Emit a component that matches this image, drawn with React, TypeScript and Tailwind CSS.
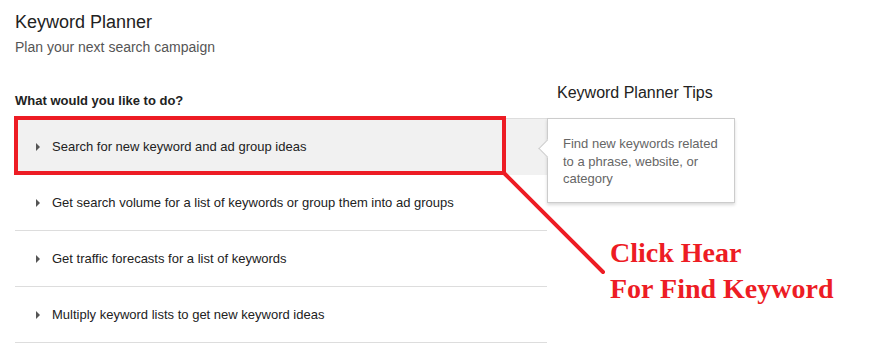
import React from "react";

const rows = [
  "Search for new keyword and ad group ideas",
  "Get search volume for a list of keywords or group them into ad groups",
  "Get traffic forecasts for a list of keywords",
  "Multiply keyword lists to get new keyword ideas",
];

function Caret() {
  return (
    <svg width="4" height="8" viewBox="0 0 4 8" className="shrink-0">
      <polygon points="0,0 4,4 0,8" fill="#555" />
    </svg>
  );
}

export default function App() {
  return (
    <div
      className="relative w-[879px] h-[343px] bg-white overflow-hidden pl-[15px] pt-[11px]"
      style={{ fontFamily: '"Liberation Sans", Arial, sans-serif' }}
    >
      <div className="text-[18px] leading-[22px] text-[#222]">Keyword Planner</div>
      <div className="mt-[5px] text-[14px] leading-[18px] text-[#555]">Plan your next search campaign</div>

      <div className="mt-[27px] flex items-start">
        <div className="w-[532px] pt-[10px]">
          <div className="text-[13px] leading-[16px] font-bold text-[#222]">What would you like to do?</div>
          <div className="mt-[9px] border-t border-[#ddd]">
            {rows.map((r, i) => (
              <div
                key={r}
                className={
                  i === 0
                    ? "h-[56px] flex items-center gap-[12px] pl-[21px] bg-[#f1f1f1]"
                    : "h-[56px] flex items-center gap-[12px] pl-[21px] border-b border-[#ddd]"
                }
              >
                <Caret />
                <span className="text-[13px] leading-[16px] text-[#222]">{r}</span>
              </div>
            ))}
          </div>
        </div>

        <div className="flex flex-col">
          <div className="pl-[10px] text-[16px] leading-[20px] text-[#222]">Keyword Planner Tips</div>
          <div className="relative mt-[15px] w-[188px] bg-white border border-[#ccc] shadow-[0_2px_3px_rgba(0,0,0,0.15)] pl-[15px] pr-[10px] pt-[16px] pb-[14px]">
            <div className="absolute left-[-7px] top-[23px] w-[13px] h-[13px] rotate-45 bg-white border-l border-b border-[#ccc]" />
            <div className="relative text-[13px] leading-[17.5px] text-[#666]">
              Find new keywords related to a phrase, website, or category
            </div>
          </div>
        </div>
      </div>

      {/* annotation overlay */}
      <div className="absolute left-[14px] top-[116px] w-[492px] h-[59px] border-[4px] border-[#ed1c24]" />
      <svg className="absolute left-0 top-0" width="879" height="343">
        <line x1="504" y1="173" x2="603" y2="272" stroke="#ed1c24" strokeWidth="4" strokeLinecap="round" />
      </svg>
      <div
        className="absolute left-[610px] top-[235px] text-[28px] leading-[36px] font-bold text-[#ed1c24]"
        style={{ fontFamily: '"Liberation Serif", "Times New Roman", serif' }}
      >
        <div>Click Hear</div>
        <div>For Find Keyword</div>
      </div>
    </div>
  );
}
